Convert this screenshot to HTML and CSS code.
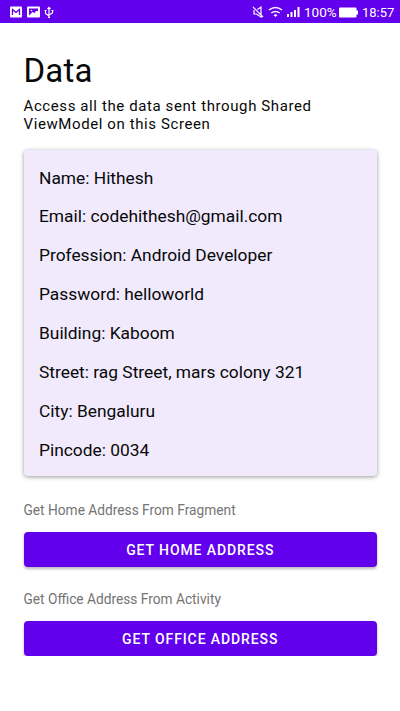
FILE: index.html
```html
<!DOCTYPE html>
<html lang="en">
<head>
<meta charset="utf-8">
<title>Data</title>
<link rel="stylesheet" href="styles.css">
</head>
<body>
<header class="status">
  <div class="group left">
    <svg width="12" height="12" viewBox="0 0 12 12"><rect width="12" height="11" y=".5" rx="1" fill="#fff"/><path d="M2.500 9V3.500L6 6.500l3.500-3V9" fill="none" stroke="#6200ee" stroke-width="1.300"/></svg>
    <svg width="13" height="12" viewBox="0 0 13 12"><rect width="13" height="11" y=".5" rx="1" fill="#fff"/><path d="M2 2.500h9V5L9 5 7.500 7 5.500 6 2 9.500z" fill="#6200ee"/><circle cx="4.500" cy="4.500" r=".8" fill="#fff"/></svg>
    <svg width="10" height="13" viewBox="0 0 10 13" fill="none" stroke="#fff" stroke-width="1.200"><path d="M5 12V1.500M3.500 3L5 1.300 6.500 3M1.500 4.500v3L5 10M8.500 4.500v2.500L5 9"/><path d="M.5 4.500h2M7.500 4.500h2M4 11.500h2"/></svg>
  </div>
  <div class="group right">
    <svg width="12" height="12" viewBox="0 0 12 12" fill="none" stroke="#fff" stroke-width="1.200"><path d="M1 1l10 10M2 4v4h2.500L9 11V1L5.500 3.500"/></svg>
    <svg width="15" height="12" viewBox="0 0 15 12" fill="none" stroke="#fff" stroke-width="1.500"><path d="M1 4q6.500-5 13 0M3.300 7q4.200-3 8.400 0"/><path d="M5.500 9q2-1.300 4 0l-2 2z" fill="#fff" stroke="none"/></svg>
    <svg width="13" height="12" viewBox="0 0 13 12" fill="#fff"><path d="M0 8h2v3H0zM3.500 6h2v5h-2zM7 4h2v7H7zM10.500 1h2v10h-2z"/></svg>
    <span class="percent">100%</span>
    <svg class="battery" width="19" height="11" viewBox="0 0 19 11"><rect y=".5" width="17.500" height="10" rx="1" fill="#fff"/><path d="M17 3.500h2v4h-2z" fill="#fff"/></svg>
    <span class="clock">18:57</span>
  </div>
</header>
<main>
  <h1>Data</h1>
  <p class="subtitle">Access all the data sent through Shared<br>ViewModel on this Screen</p>
  <section class="card">
    <p>Name: Hithesh</p>
    <p>Email: codehithesh@gmail.com</p>
    <p>Profession: Android Developer</p>
    <p>Password: helloworld</p>
    <p>Building: Kaboom</p>
    <p>Street: rag Street, mars colony 321</p>
    <p>City: Bengaluru</p>
    <p>Pincode: 0034</p>
  </section>
  <p class="label">Get Home Address From Fragment</p>
  <button>GET HOME ADDRESS</button>
  <p class="label">Get Office Address From Activity</p>
  <button>GET OFFICE ADDRESS</button>
</main>
</body>
</html>
```
FILE: styles.css
```css
* { box-sizing: border-box; }
body { margin: 0; background: #fff; color: #080808; font-family: Roboto, sans-serif; }
.status { height: 23px; padding: 1px 6px 0 10px; background: #6200ee; color: #fff; display: flex; justify-content: space-between; align-items: center; font-size: 13px; }
.group { display: flex; align-items: center; }
.left { gap: 4.500px; }
.right { gap: 4px; }
.group svg { display: block; }
.percent { width: 32px; font-size: 13.500px; }
.battery { margin-left: -1px; }
.clock { width: 32px; font-size: 13px; }
main { padding: 26px 23px 0 23.500px; }
h1 { margin: 0; font-size: 33px; line-height: 44px; font-weight: 400; letter-spacing: .2px; }
p { margin: 0; }
.subtitle { margin-top: 4px; font-size: 15px; line-height: 18px; letter-spacing: .6px; }
.card { height: 326px; margin-top: 17px; padding: 8.500px 15.500px; background: #f1eafd; border-radius: 4px; box-shadow: 0 1px 4px rgba(0,0,0,.4); font-size: 17.380px; }
.card p { height: 38.860px; line-height: 38.860px; }
.label { margin-top: 25px; height: 18px; line-height: 18px; font-size: 13.720px; color: #747474; }
button { display: block; width: 100%; height: 35px; margin-top: 13px; padding: 0; border: 0; border-radius: 4px; background: #6200ee; color: #fff; font: 500 14px Roboto, sans-serif; letter-spacing: .9px; box-shadow: 0 2px 3px rgba(0,0,0,.28); }
button + .label { margin-top: 23px; }
```
